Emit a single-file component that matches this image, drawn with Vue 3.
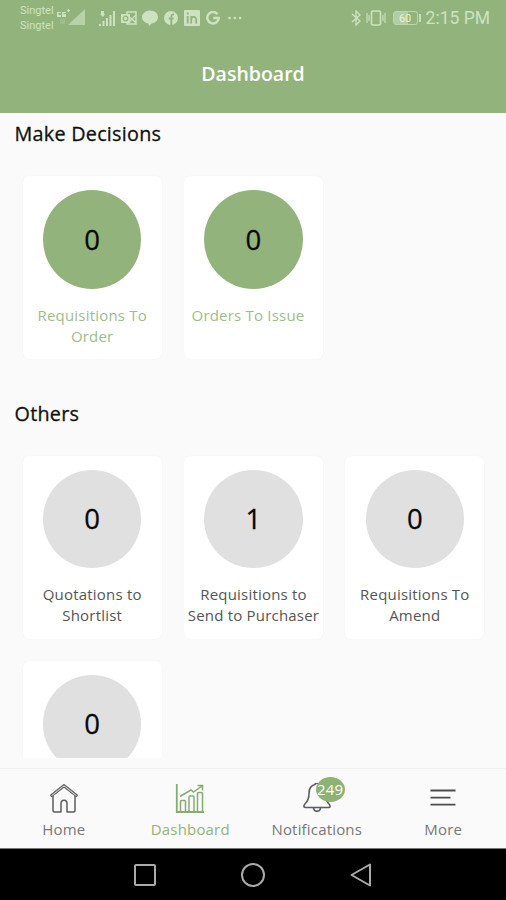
<script setup>
const sections = [
  {
    title: 'Make Decisions',
    tone: 'green',
    cards: [
      { count: 0, lines: ['Requisitions To', 'Order'] },
      { count: 0, lines: ['Orders To Issue'], nudge: true },
    ],
  },
  {
    title: 'Others',
    tone: 'grey',
    cards: [
      { count: 0, lines: ['Quotations to', 'Shortlist'] },
      { count: 1, lines: ['Requisitions to', 'Send to Purchaser'] },
      { count: 0, lines: ['Requisitions To', 'Amend'] },
      { count: 0, lines: [] },
    ],
  },
]
</script>

<template>
  <div class="phone">
    <header class="top">
      <div class="status">
        <div class="carriers"><span>Singtel</span><span>Singtel</span></div>
        <svg class="signal-a" width="30" height="20" viewBox="0 0 30 20" fill="currentColor">
          <path d="M12 17 29 1v16z" opacity=".65" />
          <path d="M1 4h4v1H2.500v2H5v2H1zM6 4h4v1H7.500v1H10v3H6zM11 2h3v1h-3zM12 1h1v3h-1z" />
          <path d="M4 11h5v5H4z" opacity=".2" />
        </svg>
        <svg class="signal-b" width="17" height="17" viewBox="0 0 17 17" fill="currentColor">
          <path d="M0 14h2v2H0zM3.500 11h2v5h-2zM7 8h2v8H7zM10.500 5h2v11h-2zM14 1h2v15h-2zM2 1h3v3h1L4 7 1 4h1z" />
        </svg>
        <svg class="outlook" width="16" height="14" viewBox="0 0 16 14">
          <path d="M6 1h9v12H6z" fill="none" stroke="currentColor" stroke-width="1.500" />
          <path d="m7 5 4 3 4-4M7 12l4-4 4 4" fill="none" stroke="currentColor" stroke-width="1.300" />
          <path fill="currentColor" d="M0 3h9v9H0z" />
          <circle cx="4.500" cy="7.500" r="2.300" fill="none" stroke="#92b47c" stroke-width="1.300" />
        </svg>
        <svg class="chat" width="16" height="16" viewBox="0 0 16 16" fill="currentColor">
          <path d="M8 .5c4.500 0 8 2.800 8 6.500s-3 6-6.500 6.500L7 16l-.5-2.600C2.800 13 0 10.500 0 7S3.500.5 8 .5z" />
        </svg>
        <svg class="facebook" width="14" height="14" viewBox="0 0 14 14">
          <circle cx="7" cy="7" r="7" fill="currentColor" />
          <path d="M7.300 14V5.500c0-1.500.8-2.200 2.700-2M4.800 7.500h4.700" fill="none" stroke="#92b47c" stroke-width="1.800" />
        </svg>
        <svg class="linkedin" width="16" height="16" viewBox="0 0 16 16">
          <rect width="16" height="16" rx="1" fill="currentColor" />
          <path d="M3.700 6v7.500M7.200 6v7.500M7.200 10c0-4 5-4 5-.3v3.800M3.700 2.500v2" fill="none" stroke="#92b47c" stroke-width="1.800" />
        </svg>
        <svg class="google" width="14" height="14" viewBox="0 0 14 14">
          <path d="M11.500 3.200A5.700 5.700 0 1 0 12.700 7H7.200" fill="none" stroke="currentColor" stroke-width="2.500" />
        </svg>
        <svg class="dots" width="14" height="4" viewBox="0 0 14 4" fill="currentColor">
          <circle cx="1.500" cy="2" r="1.300" /><circle cx="6.800" cy="2" r="1.300" /><circle cx="12.100" cy="2" r="1.300" />
        </svg>
        <div class="system">
          <svg width="10" height="16" viewBox="0 0 10 16" fill="none" stroke="currentColor" stroke-width="1.400">
            <path d="m1 4 8 7-4 4V1l4 4-8 7" />
          </svg>
          <svg width="20" height="16" viewBox="0 0 20 16" fill="none" stroke="currentColor">
            <rect x="5.500" y="1" width="9" height="14" rx="1.500" stroke-width="1.600" />
            <path d="M1 3v10M3 5v6M17 5v6M19 3v10" stroke-width="1.100" />
          </svg>
          <div class="battery"><span>60</span></div>
          <i class="cap"></i>
          <span class="clock">2:15 PM</span>
        </div>
      </div>
      <h1>Dashboard</h1>
    </header>

    <main>
      <section v-for="section in sections" :key="section.title" :class="section.tone">
        <h2>{{ section.title }}</h2>
        <div class="grid">
          <article v-for="(card, i) in section.cards" :key="i">
            <div class="count">{{ card.count }}</div>
            <p :class="{ nudge: card.nudge }">
              <span v-for="line in card.lines" :key="line">{{ line }}</span>
            </p>
          </article>
        </div>
      </section>
    </main>

    <nav>
      <a>
        <svg width="30" height="32" viewBox="0 0 30 32" fill="none" stroke="#5c5c60" stroke-width="1.500" stroke-linejoin="round">
          <path d="M1.500 12.200 15 1.500l13.500 10.700-1.200 1.400L15 4 2.700 13.600z" stroke-width="1.100" />
          <path d="M4 13v14.500c0 1 .5 1.500 1.500 1.500H12v-8.500c0-4.500 6-4.500 6 0V29h6.500c1 0 1.500-.5 1.500-1.500V13" />
        </svg>
        <span>Home</span>
      </a>
      <a class="active">
        <svg width="30" height="32" viewBox="0 0 30 32" fill="none" stroke="#86ad70" stroke-width="1.500">
          <path d="M1.800 1v28H29" stroke-width="1.800" />
          <path d="M5.500 28V18.500q0-1 1-1h3q1 0 1 1V28M14 28V14q0-1 1-1h3q1 0 1 1v14M22.500 28V10.500q0-1 1-1h3q1 0 1 1V28" />
          <path d="m5 13.500 11-6.500 2.500 2L27 3M22.500 2.500h5v5" />
        </svg>
        <span>Dashboard</span>
      </a>
      <a>
        <div class="bell">
          <svg width="30" height="32" viewBox="0 0 30 32" fill="none" stroke="#5c5c64" stroke-width="1.600" stroke-linejoin="round">
            <path d="M13 1.500c.3-1.700 3.700-1.700 4 0 4.500 1 6 4.500 6 9 0 6 1.500 8 4 10.500 1.500 1.500 1.500 3.500-.5 3.500h-23c-2 0-2-2-.5-3.500 2.500-2.500 4-4.500 4-10.500 0-4.500 1.500-8 6-9z" />
            <path d="M11.500 25c.5 4.500 6.500 4.500 7 0" />
          </svg>
          <b>249</b>
        </div>
        <span>Notifications</span>
      </a>
      <a>
        <svg width="30" height="32" viewBox="0 0 30 32" fill="none" stroke="#4c4c4c" stroke-width="1.800">
          <path d="M2.500 7.500h25M2.500 14.700h20M2.500 21.700h25" />
        </svg>
        <span>More</span>
      </a>
    </nav>

    <footer>
      <svg width="24" height="24" viewBox="0 0 24 24"><rect x="2" y="2" width="20" height="20" rx="1" /></svg>
      <svg width="24" height="24" viewBox="0 0 24 24"><circle cx="12" cy="12" r="11" /></svg>
      <svg width="24" height="24" viewBox="0 0 24 24"><path d="M21 1.500v21L2.500 12z" /></svg>
    </footer>
  </div>
</template>

<style>
body { margin: 0; }
</style>

<style scoped>
.phone {
  width: 506px;
  height: 900px;
  display: flex;
  flex-direction: column;
  overflow: hidden;
  background: #fafafa;
  font-family: "Open Sans", "Noto Sans", sans-serif;
}
svg { display: block; flex: none; }
.top { height: 113px; background: #92b47c; flex: none; }
.status {
  height: 36px;
  display: flex;
  align-items: center;
  padding: 0 16px 0 20px;
  box-sizing: border-box;
  color: #cde2bf;
  font-family: Roboto, sans-serif;
}
.carriers {
  display: flex;
  flex-direction: column;
  width: 35px;
  font-size: 11px;
  line-height: 15px;
}
.signal-a { margin-left: 1px; margin-top: -1px; }
.signal-b { margin-left: 13px; }
.outlook { margin-left: 5px; }
.chat { margin-left: 5px; }
.facebook { margin-left: 6px; }
.linkedin { margin-left: 6px; }
.google { margin-left: 6px; }
.dots { margin-left: 8px; }
.system { margin-left: auto; display: flex; align-items: center; }
.system svg + svg { margin-left: 5px; }
.battery {
  width: 25px;
  height: 14px;
  margin-left: 7px;
  border: 1px solid #bcd6ad;
  border-radius: 3px;
  box-sizing: border-box;
  background: linear-gradient(90deg, #b3cea4 62%, transparent 62%);
  display: flex;
  align-items: center;
  justify-content: center;
  font-size: 11px;
  color: #e4f2dc;
}
.cap { width: 2px; height: 8px; margin: 0 5px 0 1px; background: #c5dfb7; }
.clock { font-size: 17.500px; white-space: nowrap; }
h1 {
  margin: 0;
  padding-top: 23px;
  color: #fff;
  font-size: 19.500px;
  line-height: 30px;
  font-weight: 600;
  text-align: center;
}
main { height: 645px; overflow: hidden; flex: none; }
section { height: 279.500px; }
h2 {
  margin: 0;
  padding: 7px 0 0 14.500px;
  font-size: 19.800px;
  letter-spacing: .25px;
  line-height: 28px;
  font-weight: 400;
  -webkit-text-stroke: .3px #111;
  color: #111;
}
.grid {
  display: grid;
  grid-template-columns: repeat(3, 139px);
  grid-auto-rows: 183px;
  gap: 22px 22.300px;
  padding: 28px 0 0 22.700px;
}
article {
  background: #fff;
  border-radius: 6px;
  box-shadow: 0 0 1px rgba(0, 0, 0, .09);
  padding-top: 14px;
  box-sizing: border-box;
  display: flex;
  flex-direction: column;
  align-items: center;
}
.count {
  width: 98.500px;
  height: 98.500px;
  border-radius: 50%;
  background: #e0e0e0;
  display: flex;
  align-items: center;
  justify-content: center;
  font-size: 27.500px;
  -webkit-text-stroke: .3px #080808;
  color: #080808;
  flex: none;
}
.green .count { background: #92b47c; }
p {
  margin: 16px 0 0;
  font-size: 15px;
  letter-spacing: .2px;
  line-height: 21.300px;
  color: #555;
  text-align: center;
  white-space: nowrap;
}
p span { display: block; }
.green p { color: #9fbc8d; }
.nudge { padding-right: 11px; }
nav {
  margin-top: 10px;
  height: 80px;
  flex: none;
  box-sizing: border-box;
  border-top: 1px solid #eee;
  display: grid;
  grid-template-columns: repeat(4, 1fr);
}
nav a {
  display: flex;
  flex-direction: column;
  align-items: center;
  padding: 14px 0 0 1px;
  font-size: 15px;
  letter-spacing: .18px;
  line-height: 22px;
  color: #777;
}
nav a > span { margin-top: 3px; }
nav .active { color: #92b47c; }
.bell { position: relative; }
.bell b {
  position: absolute;
  left: 14px;
  top: -6px;
  width: 29px;
  height: 25px;
  border-radius: 50%;
  background: #8cb274;
  color: #fff;
  font-size: 15px;
  line-height: 25px;
  font-weight: 400;
  text-align: center;
}
footer {
  flex: 1;
  background: #000;
  border-top: 1px solid #777;
  display: flex;
  justify-content: center;
  align-items: center;
  gap: 84px;
}
footer svg { fill: none; stroke: #aaa; stroke-width: 2; stroke-linejoin: round; }
</style>
